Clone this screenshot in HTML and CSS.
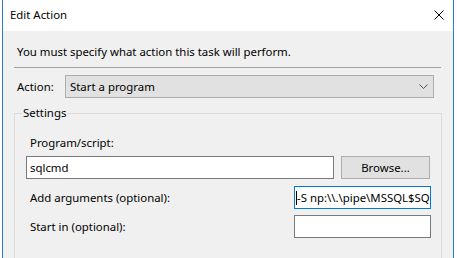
FILE: index.html
```html
<!DOCTYPE html>
<html>
<head>
<meta charset="utf-8">
<link rel="stylesheet" href="styles.css">
</head>
<body>
<div class="window">
  <div class="titlebar">
    <span class="title">Edit Action</span>
    <svg class="close" width="10" height="10" viewBox="0 0 10 10"><path d="M0.5 0.5 L9.5 9.5 M9.5 0.5 L0.5 9.5" stroke="#000" stroke-width="1" fill="none"/></svg>
  </div>
  <div class="content">
    <div class="instr">You must specify what action this task will perform.</div>
    <div class="sep"></div>
    <div class="action-row">
      <span class="action-label">Action:</span>
      <div class="combo">
        <span class="combo-text">Start a program</span>
        <svg class="chev" width="9" height="5" viewBox="0 0 9 5"><path d="M0.5 0.5 L4.5 4.5 L8.5 0.5" stroke="#555" stroke-width="1" fill="none"/></svg>
      </div>
    </div>
    <fieldset class="group">
      <legend class="legend">Settings</legend>
      <div class="prog-label">Program/script:</div>
      <div class="prog-row">
        <div class="textbox prog-box">sqlcmd</div>
        <div class="button">Browse...</div>
      </div>
      <div class="opt-row args-row">
        <span class="opt-label">Add arguments (optional):</span>
        <div class="textbox opt-box focused"><span class="caret"></span>-S np:\\.\pipe\MSSQL$SQLEXPRESS\sql\query</div>
      </div>
      <div class="opt-row start-row">
        <span class="opt-label">Start in (optional):</span>
        <div class="textbox opt-box"></div>
      </div>
    </fieldset>
  </div>
</div>
</body>
</html>
```
FILE: styles.css
```css
html, body {
  margin: 0;
  padding: 0;
  background: #ffffff;
}
body {
  width: 457px;
  height: 258px;
  overflow: hidden;
  font-family: "Noto Sans", "Open Sans", sans-serif;
  font-size: 11.4px;
  color: #000;
}
.window {
  margin-left: 2px;
  width: 450px;
  height: 258px;
  border-left: 1px solid #2b7bd2;
  border-right: 1px solid #2b7bd2;
  display: flex;
  flex-direction: column;
}
.titlebar {
  height: 31px;
  background: #fff;
  display: flex;
  align-items: center;
  justify-content: space-between;
  flex: none;
}
.title {
  padding-left: 7px;
  line-height: 16px;
  padding-bottom: 1px;
}
.close {
  margin-right: 9px;
  margin-bottom: 2px;
}
.content {
  flex: 1;
  background: #f0f0f0;
}
.instr {
  padding: 13px 0 0 14px;
  line-height: 16px;
  height: 23px;
}
.sep {
  margin-left: 11px;
  width: 427px;
  border-top: 1px solid #a0a0a0;
}
.action-row {
  margin-top: 7px;
  display: flex;
  align-items: center;
  height: 23px;
}
.action-label {
  padding-left: 14px;
  width: 62px;
  box-sizing: border-box;
  flex: none;
}
.combo {
  width: 369px;
  height: 23px;
  box-sizing: border-box;
  background: #e1e1e1;
  border: 1px solid #adadad;
  display: flex;
  align-items: center;
  justify-content: space-between;
}
.combo-text {
  padding-left: 4px;
}
.chev {
  margin-right: 5px;
}
.group {
  margin: 7px 0 0 11px;
  padding: 0 0 20px 0;
  width: 428px;
  box-sizing: border-box;
  border: 1px solid #dcdcdc;
  min-width: 0;
}
.legend {
  margin-left: 7px;
  padding: 0 1px;
  line-height: 16px;
}
.prog-label {
  margin-top: 14px;
  padding-left: 15px;
  line-height: 16px;
}
.prog-row {
  margin-top: 5px;
  padding-left: 11px;
  display: flex;
  gap: 7px;
}
.textbox {
  height: 23px;
  box-sizing: border-box;
  background: #fff;
  border: 1px solid #7a7a7a;
  padding-left: 3px;
  line-height: 21px;
  white-space: nowrap;
  overflow: hidden;
}
.prog-box {
  width: 308px;
}
.button {
  width: 89px;
  height: 23px;
  box-sizing: border-box;
  background: #e1e1e1;
  border: 1px solid #adadad;
  text-align: center;
  line-height: 21px;
}
.opt-row {
  display: flex;
  align-items: center;
  padding-left: 15px;
  padding-right: 10px;
}
.args-row {
  margin-top: 7px;
}
.start-row {
  margin-top: 6px;
}
.opt-label {
  flex: 1;
}
.opt-box {
  width: 137px;
  flex: none;
  padding-left: 1px;
}
.focused {
  border-color: #0078d7;
}
.caret {
  display: inline-block;
  width: 1px;
  height: 14px;
  background: #000;
  vertical-align: -3px;
}
```
